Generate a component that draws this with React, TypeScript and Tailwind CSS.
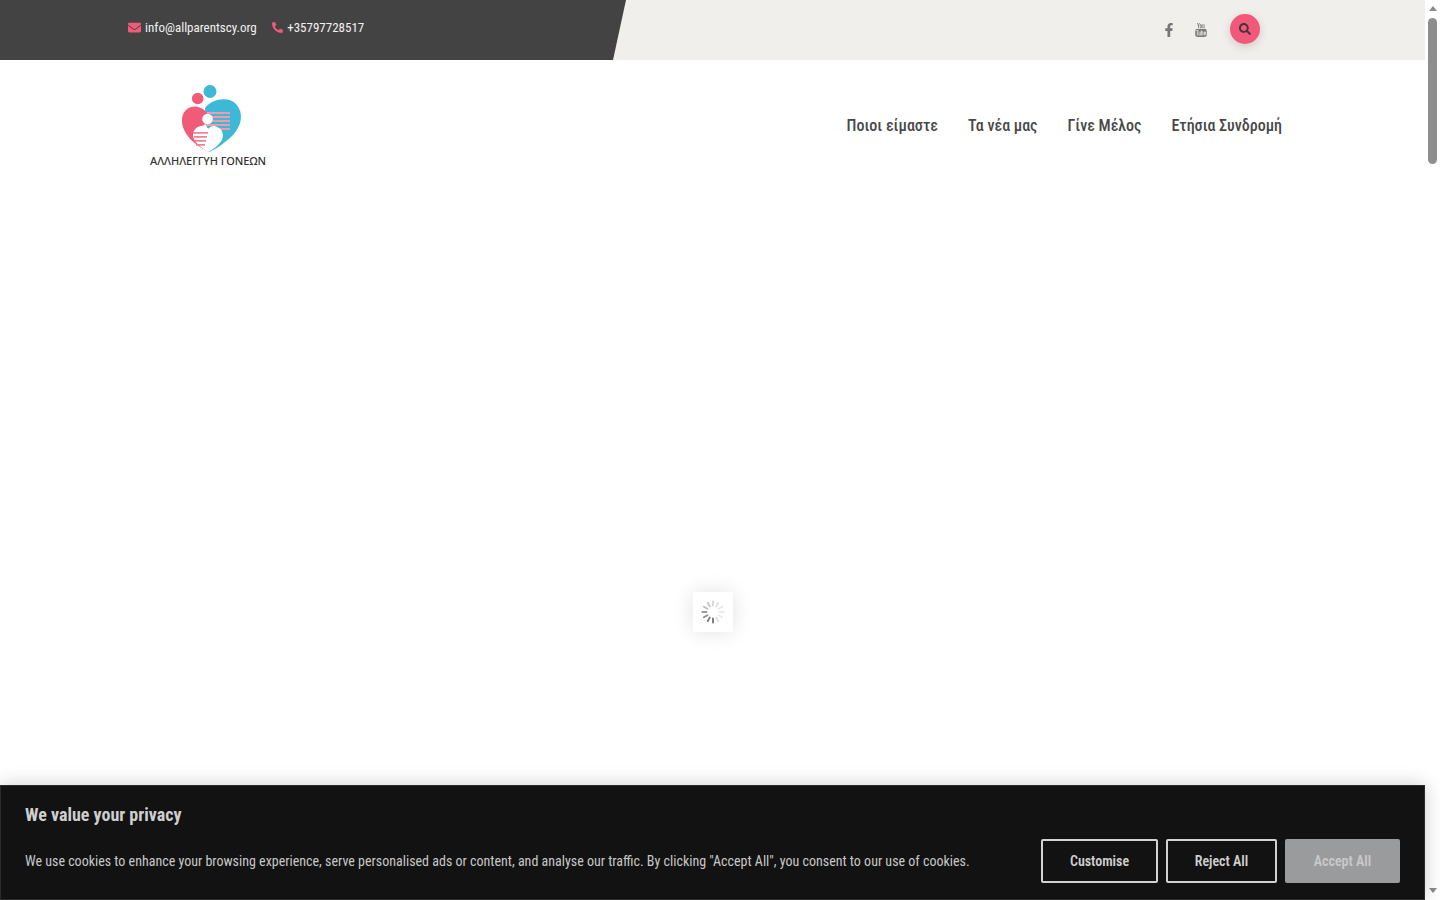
import React from 'react';
import { FaEnvelope, FaPhone, FaFacebookF, FaSearch } from 'react-icons/fa';
import { TfiYoutube } from 'react-icons/tfi';

const Logo = () => (
  <svg width="116" height="74" viewBox="10 5 116 74" className="block">
    <circle cx="70" cy="16.5" r="6.5" fill="#3db8d6" />
    <circle cx="57.7" cy="23.5" r="5.8" fill="#ef5b78" />
    <path d="M65 33C72 24 88 21 96 29C104 38 102 50 93 60C85 68 76 74 69 77C68 60 66 45 65 33Z" fill="#3db8d6" />
    <path d="M69 77C56 71 43 60 42 47C41 36 50 30 58 32C62 33 65 35 67 38C64 45 64 50 62 55C60 62 64 70 69 77Z" fill="#ef5b78" />
    {[37, 41, 45, 49, 53].map(y => (
      <rect key={y} x="66" y={y} width="24" height="2" fill="#f39bab" />
    ))}
    <path d="M66 36C63 41 62 46 63 50L71 48L66 36Z" fill="#ef5b78" />
    <circle cx="67.5" cy="44" r="5.3" fill="#ffffff" />
    <path d="M68 77C60 72 53 66 53 60C53 54 59 50 64 51C67 52 68 53 68.5 54C70 51 74 50 77 52C83 54 84 60 82 65C79 70 74 74 68 77Z" fill="#ffffff" />
    {[57, 61, 65, 69].map((y, i) => (
      <rect key={y} x={53 + i} y={y} width={15 - i * 2} height="1.7" fill="#ef7f93" />
    ))}
  </svg>
);

const Spinner = () => (
  <svg width="24" height="24" viewBox="0 0 24 24">
    {Array.from({ length: 12 }).map((_, i) => (
      <rect
        key={i}
        x="11.1"
        y="0.5"
        width="1.8"
        height="6"
        rx="0.9"
        fill="#555555"
        opacity={[0.25, 0.2, 0.15, 0.12, 0.12, 0.2, 0.85, 0.75, 0.65, 0.6, 0.4, 0.35][i]}
        transform={`rotate(${i * 30} 12 12)`}
      />
    ))}
  </svg>
);

const Scrollbar = () => (
  <div className="w-[15px] shrink-0 bg-white flex flex-col items-center pb-[2px]">
    <div className="h-[16px] flex items-center justify-center">
      <div className="w-0 h-0 border-x-[4px] border-x-transparent border-b-[5px] border-b-[#8a8a8a]" />
    </div>
    <div className="w-[9px] h-[146px] mt-[2px] rounded-full bg-[#8e8e8e]" />
    <div className="flex-1" />
    <div className="h-[15px] flex items-center justify-center">
      <div className="w-0 h-0 border-x-[4px] border-x-transparent border-t-[5px] border-t-[#8a8a8a]" />
    </div>
  </div>
);

export default function App() {
  return (
    <div className="h-[900px] overflow-hidden flex bg-white font-['Roboto',sans-serif] [font-stretch:75%]">
      <div className="flex-1 min-w-0 relative">
        {/* top bar */}
        <div className="h-[60px] bg-[#f0efeb] relative flex items-center">
          <div className="absolute inset-y-0 left-0 w-[626px] bg-[#434343] [clip-path:polygon(0_0,100%_0,613px_100%,0_100%)]" />
          <div className="relative flex items-center pl-[128px] text-[13px] text-[#f2f2f2] -mt-[5px]">
            <FaEnvelope className="text-[#ef5b78] text-[13px] mr-[4px]" />
            <span>info@allparentscy.org</span>
            <FaPhone className="text-[#ef5b78] text-[11px] ml-[15px] mr-[4.5px] rotate-[90deg]" />
            <span>+35797728517</span>
          </div>
          <div className="relative ml-auto mr-[165px] flex items-center">
            <FaFacebookF className="text-[#777777] text-[14px]" />
            <TfiYoutube className="text-[#777777] text-[14px] ml-[18px]" />
            <div className="ml-[22px] -mt-[2px] w-[30px] h-[30px] rounded-full bg-[#f2587a] shadow-[0_3px_10px_rgba(0,0,0,0.15)] flex items-center justify-center">
              <FaSearch className="text-[#43343a] text-[12px]" />
            </div>
          </div>
        </div>

        {/* header */}
        <div className="h-[130px] flex items-start justify-between pl-[150px] pr-[143px]">
          <div className="pt-[20px] w-[116px] flex flex-col items-center">
            <Logo />
            <span className="text-[11px] leading-[14px] font-medium whitespace-nowrap text-[#333333] font-['Noto_Sans',sans-serif] [font-stretch:100%]">ΑΛΛΗΛΕΓΓΥΗ ΓΟΝΕΩΝ</span>
          </div>
          <nav className="flex gap-[30px] pt-[55px] text-[16px] leading-[22px] font-medium text-[#484848]">
            <a>Ποιοι είμαστε</a>
            <a>Τα νέα μας</a>
            <a>Γίνε Μέλος</a>
            <a>Ετήσια Συνδρομή</a>
          </nav>
        </div>

        {/* loading spinner */}
        <div className="absolute left-[693px] top-[592px] w-[40px] h-[40px] bg-white shadow-[0_0_20px_rgba(0,0,0,0.12)] flex items-center justify-center">
          <Spinner />
        </div>

        {/* cookie banner */}
        <div className="absolute left-0 right-0 bottom-0 h-[115px] bg-[#121212] border border-[#2a2a2a] shadow-[0_0_18px_rgba(0,0,0,0.2)] px-[24px] pt-[18px] text-[#cfcfcf]">
          <div className="text-[18px] leading-[22px] font-bold">We value your privacy</div>
          <div className="mt-[13px] flex items-center justify-between">
            <p className="text-[14px] leading-[20px] text-[#c8c8c8]">We use cookies to enhance your browsing experience, serve personalised ads or content, and analyse our traffic. By clicking "Accept All", you consent to our use of cookies.</p>
            <div className="flex gap-[8px] text-[14px] font-semibold">
              <button className="w-[117px] h-[44px] border-2 border-[#d2d2d2] rounded-[2px]">Customise</button>
              <button className="w-[111px] h-[44px] border-2 border-[#d2d2d2] rounded-[2px]">Reject All</button>
              <button className="w-[115px] h-[44px] bg-[#999b9c] text-[#c9c9c9] rounded-[2px]">Accept All</button>
            </div>
          </div>
        </div>
      </div>
      <Scrollbar />
    </div>
  );
}
